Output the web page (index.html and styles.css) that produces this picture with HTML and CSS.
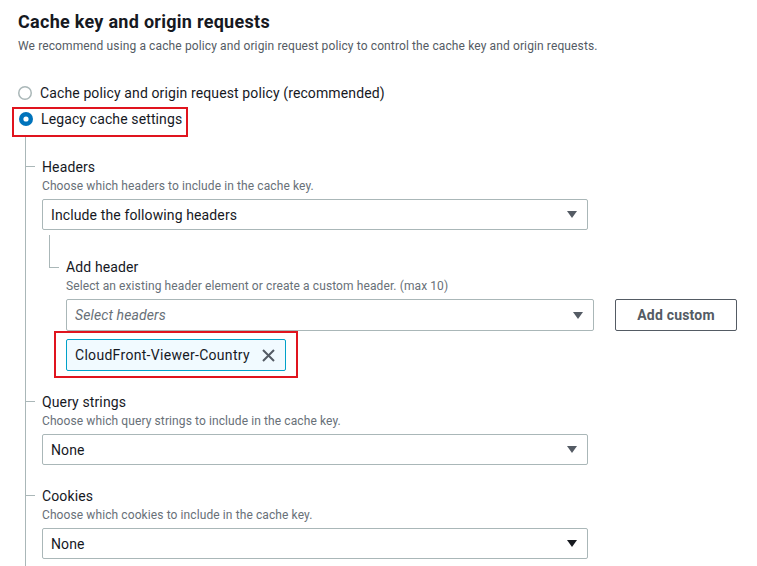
FILE: index.html
```html
<!DOCTYPE html>
<html>
<head>
<meta charset="utf-8">
<link rel="stylesheet" href="styles.css">
</head>
<body>
  <h1 class="title">Cache key and origin requests</h1>
  <p class="subtitle">We recommend using a cache policy and origin request policy to control the cache key and origin requests.</p>

  <div class="radios">
    <div class="radio-row">
      <svg class="radio" width="14" height="14" viewBox="0 0 14 14"><circle cx="7" cy="7" r="6.25" fill="#fff" stroke="#aab7b8" stroke-width="1.5"/></svg>
      <span>Cache policy and origin request policy (recommended)</span>
    </div>
    <div class="highlight highlight-radio">
      <div class="radio-row">
        <svg class="radio" width="14" height="14" viewBox="0 0 14 14"><circle cx="7" cy="7" r="7" fill="#0073bb"/><circle cx="7" cy="7" r="2.6" fill="#fff"/></svg>
        <span>Legacy cache settings</span>
      </div>
    </div>
  </div>

  <div class="tree">
    <section class="field">
      <div class="label">Headers</div>
      <div class="desc">Choose which headers to include in the cache key.</div>
      <div class="select select-main">
        <span class="value">Include the following headers</span>
        <svg class="caret" width="10" height="7" viewBox="0 0 10 7"><path d="M0 0h10L5 7z" fill="#545b64"/></svg>
      </div>

      <div class="subfield">
        <div class="label">Add header</div>
        <div class="desc">Select an existing header element or create a custom header. (max 10)</div>
        <div class="input-row">
          <div class="select select-sub">
            <span class="placeholder">Select headers</span>
            <svg class="caret" width="10" height="7" viewBox="0 0 10 7"><path d="M0 0h10L5 7z" fill="#545b64"/></svg>
          </div>
          <button class="btn">Add custom</button>
        </div>
        <div class="highlight highlight-tag">
          <div class="tag">
            <span>CloudFront-Viewer-Country</span>
            <svg class="close" width="13" height="13" viewBox="0 0 13 13"><path d="M1 1l11 11M12 1L1 12" stroke="#545b64" stroke-width="2" fill="none"/></svg>
          </div>
        </div>
      </div>
    </section>

    <section class="field field-query">
      <div class="label">Query strings</div>
      <div class="desc">Choose which query strings to include in the cache key.</div>
      <div class="select select-main">
        <span class="value">None</span>
        <svg class="caret" width="10" height="7" viewBox="0 0 10 7"><path d="M0 0h10L5 7z" fill="#545b64"/></svg>
      </div>
    </section>

    <section class="field field-cookies">
      <div class="label">Cookies</div>
      <div class="desc">Choose which cookies to include in the cache key.</div>
      <div class="select select-main">
        <span class="value">None</span>
        <svg class="caret" width="10" height="7" viewBox="0 0 10 7"><path d="M0 0h10L5 7z" fill="#16191f"/></svg>
      </div>
    </section>
  </div>
</body>
</html>
```

FILE: styles.css
```css
html, body {
  margin: 0;
  padding: 0;
  background: #ffffff;
}

body {
  box-sizing: border-box;
  display: flex;
  flex-direction: column;
  align-items: flex-start;
  height: 566px;
  padding-left: 18px;
  font-family: Roboto, "Liberation Sans", sans-serif;
  color: #16191f;
  font-size: 14px;
  letter-spacing: 0.12px;
  overflow: hidden;
}

.title {
  margin: 11px 0 0;
  font-size: 18px;
  line-height: 22px;
  font-weight: 700;
  letter-spacing: 0.28px;
}

.subtitle {
  margin: 5px 0 0;
  font-size: 12px;
  line-height: 16px;
  color: #545b64;
  letter-spacing: 0.12px;
}

.radios {
  margin-top: 29px;
}

.radio-row {
  display: flex;
  align-items: center;
  gap: 8px;
  height: 20px;
  font-size: 14px;
  line-height: 20px;
}

.radio {
  flex: none;
  display: block;
}

.highlight {
  border: 2px solid #e0141e;
  box-sizing: border-box;
}

.highlight-radio {
  margin-top: 4px;
  margin-left: -6px;
  width: 176px;
  height: 30px;
  padding: 0 0 0 5px;
}

.tree {
  flex: 1 1 auto;
  min-height: 0;
  margin-left: 7px;
  border-left: 1px solid #aab7b8;
  padding-left: 16px;
  padding-top: 20px;
}

.field {
  position: relative;
  width: 546px;
}

.field::before {
  content: "";
  position: absolute;
  left: -17px;
  top: 9px;
  width: 10px;
  height: 1px;
  background: #aab7b8;
}

.label {
  font-size: 14px;
  line-height: 20px;
}

.desc {
  margin-top: 1px;
  font-size: 12px;
  line-height: 17px;
  color: #687078;
  letter-spacing: 0.1px;
}

.select {
  margin-top: 4px;
  box-sizing: border-box;
  height: 31px;
  border: 1px solid #aab7b8;
  border-radius: 2px;
  display: flex;
  align-items: center;
  justify-content: space-between;
  padding: 0 10px 0 8px;
  background: #fff;
}

.select-main {
  width: 546px;
}

.value {
  font-size: 14px;
}

.placeholder {
  font-size: 14px;
  font-style: italic;
  color: #687078;
}

.caret {
  display: block;
  flex: none;
}

.subfield {
  position: relative;
  margin-top: 27px;
  padding-left: 24px;
}

.subfield::before {
  content: "";
  position: absolute;
  left: 7px;
  top: -22px;
  width: 9px;
  height: 32px;
  border-left: 1px solid #aab7b8;
  border-bottom: 1px solid #aab7b8;
}

.input-row {
  display: flex;
  align-items: flex-start;
  gap: 21px;
}

.select-sub {
  width: 528px;
  flex: none;
  height: 32px;
}

.btn {
  margin-top: 4px;
  box-sizing: border-box;
  width: 122px;
  height: 32px;
  flex: none;
  border: 1px solid #545b64;
  border-radius: 2px;
  background: #fff;
  color: #545b64;
  font-family: inherit;
  font-size: 14px;
  font-weight: 700;
  letter-spacing: 0.2px;
  padding: 0;
}

.highlight-tag {
  display: inline-block;
  margin-left: -12px;
  padding: 6px 10px 5px 10px;
}

.tag {
  box-sizing: border-box;
  height: 32px;
  display: flex;
  align-items: center;
  gap: 12px;
  padding: 0 10px 0 8px;
  border: 1px solid #00a1c9;
  border-radius: 2px;
  background: #f1faff;
  font-size: 14px;
  letter-spacing: 0.3px;
}

.close {
  display: block;
  flex: none;
}

.field-query {
  margin-top: 14px;
}

.field-cookies {
  margin-top: 21px;
}
```
